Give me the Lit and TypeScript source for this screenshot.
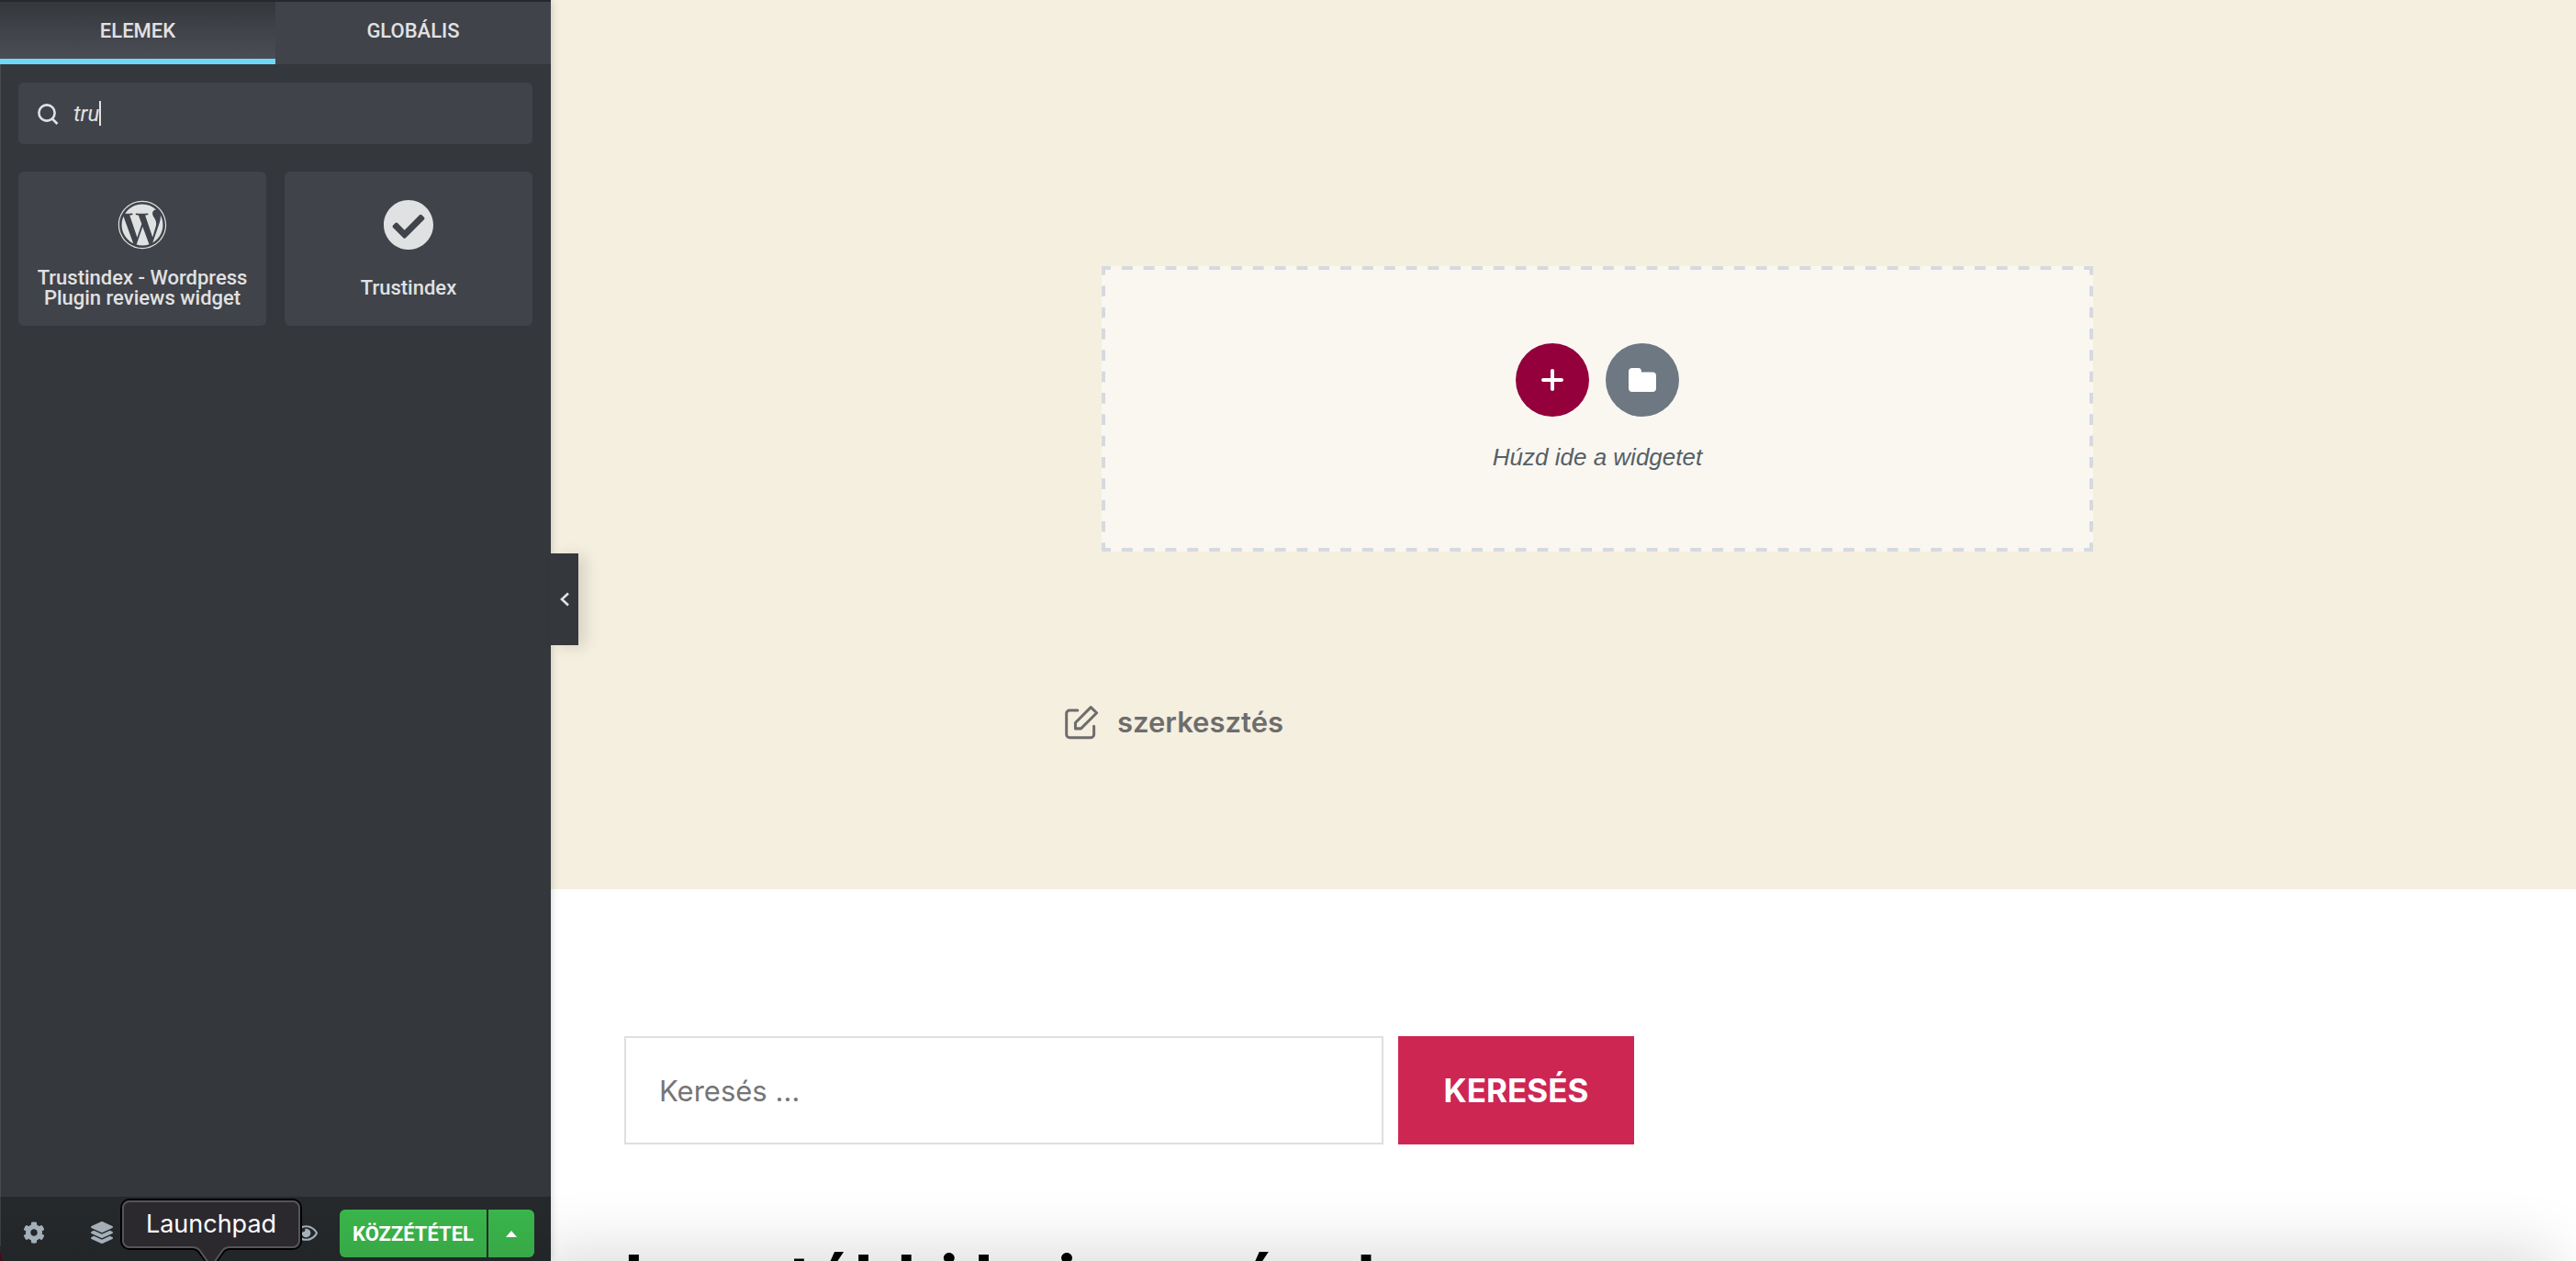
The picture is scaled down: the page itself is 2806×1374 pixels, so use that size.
import { LitElement, html, css, svg } from "lit";
import { customElement } from "lit/decorators.js";

const icon = (path: string, viewBox = "0 0 512 512") =>
  html`<svg class="icon" viewBox=${viewBox} aria-hidden="true">${svg`<path d=${path}></path>`}</svg>`;

const WORDPRESS =
  "M61.7 169.4l101.5 278C92.2 413 43.3 340.2 43.3 256c0-30.9 6.6-60.1 18.4-86.6zm337.9 75.9c0-26.3-9.4-44.5-17.5-58.7-10.8-17.5-20.9-32.4-20.9-49.9 0-19.6 14.8-37.8 35.7-37.8.9 0 1.8.1 2.8.2-37.9-34.7-88.3-55.9-143.7-55.9-74.3 0-139.7 38.1-177.8 95.9 5 .2 9.7.3 13.7.3 22.2 0 56.7-2.7 56.7-2.7 11.5-.7 12.8 16.2 1.4 17.5 0 0-11.5 1.3-24.3 2l77.5 230.4L249.8 247l-33.1-90.8c-11.5-.7-22.3-2-22.3-2-11.5-.7-10.1-18.2 1.3-17.5 0 0 35.1 2.7 56 2.7 22.2 0 56.7-2.7 56.7-2.7 11.5-.7 12.8 16.2 1.4 17.5 0 0-11.5 1.3-24.3 2l76.9 228.7 21.2-70.9c9-29.4 16-50.5 16-68.7zm-139.9 29.3l-63.8 185.5c19.1 5.6 39.2 8.7 60.1 8.7 24.8 0 48.5-4.3 70.6-12.1-.6-.9-1.1-1.9-1.5-2.9l-65.4-179.2zm183-120.7c.9 6.8 1.4 14 1.4 21.9 0 21.6-4 45.8-16.2 76.2l-65 187.9C426.2 403 468.7 334.5 468.7 256c0-37-9.4-71.8-26-102.1zM504 256c0 136.8-111.3 248-248 248C119.2 504 8 392.7 8 256 8 119.2 119.2 8 256 8c136.7 0 248 111.2 248 248zm-11.4 0c0-130.5-106.2-236.6-236.6-236.6C125.5 19.4 19.4 125.5 19.4 256S125.6 492.6 256 492.6c130.5 0 236.6-106.1 236.6-236.6z";
const CHECK =
  "M504 256c0 136.967-111.033 248-248 248S8 392.967 8 256 119.033 8 256 8s248 111.033 248 248zM227.314 387.314l184-184c6.248-6.248 6.248-16.379 0-22.627l-22.627-22.627c-6.248-6.249-16.379-6.249-22.628 0L216 308.118l-70.059-70.059c-6.248-6.248-16.379-6.248-22.628 0l-22.627 22.627c-6.248 6.248-6.248 16.379 0 22.627l104 104c6.249 6.249 16.379 6.249 22.628.001z";
const LAYERS =
  "M12.41 148.02l232.94 105.67c6.8 3.09 14.49 3.09 21.29 0l232.94-105.67c16.55-7.51 16.55-32.52 0-40.03L266.65 2.31a25.607 25.607 0 0 0-21.29 0L12.41 107.98c-16.55 7.51-16.55 32.53 0 40.04zm487.18 88.28l-58.09-26.33-161.64 73.27c-7.56 3.43-15.59 5.17-23.86 5.17s-16.29-1.74-23.86-5.17L70.51 209.97l-58.1 26.33c-16.55 7.5-16.55 32.5 0 40l232.94 105.59c6.8 3.08 14.49 3.08 21.29 0L499.59 276.3c16.55-7.5 16.55-32.5 0-40zm0 127.8l-57.87-26.23-161.86 73.37c-7.56 3.43-15.59 5.17-23.86 5.17s-16.29-1.74-23.86-5.17L70.29 337.87 12.41 364.1c-16.55 7.5-16.55 32.5 0 40l232.94 105.59c6.8 3.08 14.49 3.08 21.29 0L499.59 404.1c16.55-7.5 16.55-32.5 0-40z";
const COG =
  "M487.4 315.7l-42.6-24.6c4.3-23.2 4.3-47 0-70.2l42.6-24.6c4.9-2.8 7.1-8.6 5.5-14-11.1-35.6-30-67.8-54.7-94.6-3.8-4.1-10-5.1-14.8-2.3L380.8 110c-17.9-15.4-38.5-27.3-60.8-35.1V25.8c0-5.6-3.9-10.5-9.4-11.7-36.7-8.2-74.3-7.8-109.2 0-5.5 1.2-9.4 6.1-9.4 11.7V75c-22.2 7.9-42.8 19.8-60.8 35.1L88.7 85.5c-4.9-2.8-11-1.9-14.8 2.3-24.7 26.7-43.6 58.9-54.7 94.6-1.7 5.4.6 11.2 5.5 14L67.3 221c-4.3 23.2-4.3 47 0 70.2l-42.6 24.6c-4.9 2.8-7.1 8.6-5.5 14 11.1 35.6 30 67.8 54.7 94.6 3.8 4.1 10 5.1 14.8 2.3l42.6-24.6c17.9 15.4 38.5 27.3 60.8 35.1v49.2c0 5.6 3.9 10.5 9.4 11.7 36.7 8.2 74.3 7.8 109.2 0 5.5-1.2 9.4-6.1 9.4-11.7v-49.2c22.2-7.9 42.8-19.8 60.8-35.1l42.6 24.6c4.9 2.8 11 1.9 14.8-2.3 24.7-26.7 43.6-58.9 54.7-94.6 1.5-5.5-.7-11.3-5.6-14.1zM256 336c-44.1 0-80-35.9-80-80s35.9-80 80-80 80 35.9 80 80-35.9 80-80 80z";
const EYE =
  "M288 144a110.94 110.94 0 0 0-31.24 5 55.4 55.4 0 0 1 7.24 27 56 56 0 0 1-56 56 55.4 55.4 0 0 1-27-7.24A111.71 111.71 0 1 0 288 144zm284.52 97.4C518.29 135.59 410.93 64 288 64S57.68 135.64 3.48 241.41a32.35 32.35 0 0 0 0 29.19C57.71 376.41 165.07 448 288 448s230.32-71.64 284.52-177.41a32.35 32.35 0 0 0 0-29.19zM288 400c-98.65 0-189.09-55-237.93-144C98.91 167 189.34 112 288 112s189.09 55 237.93 144C477.1 345 386.66 400 288 400z";

const base = css`
  * { box-sizing: border-box; }
  button, input { font: inherit; color: inherit; margin: 0; border: 0; padding: 0; background: none; border-radius: 0; outline: none; }
  button { cursor: pointer; display: flex; align-items: center; justify-content: center; }
  svg { display: block; fill: currentColor; }
`;

@customElement("editor-panel")
class EditorPanel extends LitElement {
  static styles = [
    base,
    css`
      :host { display: flex; flex-direction: column; position: relative; z-index: 2; background: #34383c; color: #e0e1e3; font-family: Roboto, sans-serif; font-size: 22px; box-shadow: 0 0 10px rgba(0, 0, 0, 0.2); border-bottom-left-radius: 6px 16px; }
      :host::after { content: ""; position: absolute; left: 0; top: 70px; bottom: 16px; width: 1px; background: rgba(255, 255, 255, 0.1); }
      .tabs { display: grid; grid-template-columns: 1fr 1fr; border-top: 2px solid #26292c; height: 70px; }
      .tab { background: #404349; font-weight: 500; padding-bottom: 6px; text-transform: uppercase; }
      .tab.active { background: linear-gradient(#34383c, #4b4d56); border-bottom: 6px solid #71d7f7; padding: 0; }
      .search { display: flex; align-items: center; margin: 20px 20px 0; height: 67px; padding: 0 20px; background: #404349; border-radius: 6px; }
      .search svg { width: 24px; height: 28px; flex: none; margin-right: 16px; }
      .search input { font-style: italic; font-size: 24px; height: 40px; flex: none; field-sizing: content; caret-color: transparent; }
      .caret { width: 2px; height: 27px; background: #e0e1e3; }
      .cards { display: grid; grid-template-columns: 1fr 1fr; gap: 20px; padding: 30px 20px 0; flex: 1; align-content: start; }
      .card { min-height: 168px; border-radius: 6px; background: #404349; flex-direction: column; justify-content: flex-start; font-weight: 500; line-height: 22px; padding: 31px 10px 0; gap: 20px; }
      .card .icon { width: 54px; height: 54px; }
      .card .name { min-height: 44px; display: flex; align-items: center; text-align: center; }
      .footer { display: flex; height: 70px; background: linear-gradient(#26292c, #232629); padding: 10px 18px 0 0; border-bottom-left-radius: 6px 16px; }
      .tools { display: grid; grid-template-columns: repeat(5, 1fr); flex: 1; color: #a4afb7; padding-bottom: 2px; }
      .tools .icon { width: 24px; height: 24px; }
      .tools .eye { grid-column: 5; }
      .tools .eye .icon { width: 25px; height: 17px; }
      .publish { display: flex; gap: 2px; align-items: flex-start; padding-top: 4px; color: #fff; font-weight: 700; }
      .publish button { height: 52px; background: linear-gradient(#39b54a, #38a847); }
      .main { width: 160px; border-radius: 6px 0 0 6px; text-transform: uppercase; }
      .more { width: 50px; border-radius: 0 6px 6px 0; }
      .handle { position: absolute; left: 100%; top: 603px; width: 30px; height: 100px; background: #34383c; box-shadow: 8px 2px 16px rgba(0, 0, 0, 0.12); }
      .handle svg { width: 12px; height: 16px; }
      .tip { position: absolute; z-index: 1; left: 131px; bottom: 0; width: 198px; height: 68px; padding-top: 10px; text-align: center; font: 27px/36px Inter, sans-serif; color: #fff; }
      .tip svg { position: absolute; inset: 0; z-index: -1; width: 198px; height: 68px; }
    `,
  ];

  render() {
    return html`
      <div class="tabs">
        <button class="tab active">Elemek</button>
        <button class="tab">Globális</button>
      </div>
      <label class="search">
        <svg viewBox="0 0 24 28" aria-hidden="true"><g fill="none" stroke="currentColor" stroke-width="2.6"><circle cx="11" cy="13" r="8.6"></circle><path d="M17 19.500l5.500 5.500"></path></g></svg>
        <input type="text" value="tru" aria-label="Keresés" />
        <span class="caret"></span>
      </label>
      <div class="cards">
        <button class="card">${icon(WORDPRESS)}<span class="name">Trustindex - Wordpress Plugin reviews widget</span></button>
        <button class="card">${icon(CHECK, "8 8 496 496")}<span class="name">Trustindex</span></button>
      </div>
      <div class="footer">
        <div class="tools">
          <button>${icon(COG)}</button>
          <button>${icon(LAYERS)}</button>
          <button class="eye">${icon(EYE, "0 64 576 384")}</button>
        </div>
        <div class="publish">
          <button class="main">Közzététel</button>
          <button class="more"><svg width="12" height="7" viewBox="0 0 12 7" aria-hidden="true"><path d="M6 0l6 7H0z"></path></svg></button>
        </div>
      </div>
      <button class="handle"><svg viewBox="0 0 12 16" aria-hidden="true"><path d="M10 1.500L3 8l7 6.500" fill="none" stroke="#e0e1e3" stroke-width="2.600"></path></svg></button>
      <div class="tip" role="tooltip">
        <svg viewBox="0 0 198 68" aria-hidden="true">
          <path d="M10 1H188a9 9 0 0 1 9 9V46a9 9 0 0 1-9 9H119Q115 55 112 59L104 70H94L86 59Q83 55 79 55H10a9 9 0 0 1-9-9V10a9 9 0 0 1 9-9z" fill="#2b292e" stroke="#000" stroke-width="2"></path>
          <path d="M10 3H188a7 7 0 0 1 7 7V46a7 7 0 0 1-7 7H119Q114 53 111 57L102 70H96L87 57Q84 53 79 53H10a7 7 0 0 1-7-7V10a7 7 0 0 1 7-7z" fill="none" stroke="#555457" stroke-width="2"></path>
        </svg>
        Launchpad
      </div>
    `;
  }
}

@customElement("page-preview")
class PagePreview extends LitElement {
  static styles = [
    base,
    css`
      :host { display: flex; flex-direction: column; position: relative; overflow: hidden; background: #fff; font-family: Inter, sans-serif; }
      .content { background: #f5efe0; padding: 290px 0 161px 74px; display: flex; flex-direction: column; align-items: center; }
      .drop { position: relative; width: 100%; max-width: 1080px; background: rgba(255, 255, 255, 0.5); display: flex; flex-direction: column; align-items: center; padding: 84px 0 87px; }
      .dashes { position: absolute; inset: 0; width: 100%; height: 100%; overflow: hidden; stroke: #d5dadf; stroke-width: 8px; stroke-dasharray: 12 12; stroke-dashoffset: 2; }
      .actions { display: flex; gap: 18px; color: #fff; }
      .round { width: 80px; height: 80px; border-radius: 50%; background: #93003c; }
      .round.grey { background: #6d7882; }
      .hint { margin-top: 28px; font: italic 26px/32px "Liberation Sans", sans-serif; color: #556068; }
      .meta { width: 100%; max-width: 1160px; margin-top: 165px; display: flex; }
      .edit { display: flex; align-items: center; gap: 18px; color: #6d6d6d; font-weight: 600; font-size: 31px; line-height: 42px; text-decoration: none; }
      .edit svg { width: 39px; height: 39px; }
      .widgets { padding: 160px 80px 0; }
      .form { display: flex; gap: 16px; max-width: 1100px; height: 118px; }
      .field { flex: 1; border: 2px solid #dedfdf; padding: 0 36px; font-size: 31px; }
      .field::placeholder { color: #757575; opacity: 1; }
      .submit { width: 257px; background: #cd2653; color: #fff; font-weight: 700; font-size: 35px; text-transform: uppercase; }
      h2 { margin: 101px 0 0; font-size: 74px; line-height: 92px; font-weight: 700; color: #000; white-space: nowrap; }
      .shade { position: absolute; left: 0; right: 40px; top: 100%; height: 60px; box-shadow: 0 0 64px 16px rgba(0, 0, 0, 0.13); }
    `,
  ];

  render() {
    return html`
      <section class="content">
        <div class="drop">
          <svg class="dashes" aria-hidden="true">
            <line x1="0" y1="0" x2="100%" y2="0" pathLength="1088"></line>
            <line x1="0" y1="100%" x2="100%" y2="100%" pathLength="1088"></line>
            <line x1="0" y1="0" x2="0" y2="100%" pathLength="320"></line>
            <line x1="100%" y1="0" x2="100%" y2="100%" pathLength="320"></line>
          </svg>
          <div class="actions">
            <button class="round"><svg width="24" height="24" viewBox="0 0 24 24" aria-hidden="true"><path d="M12 2v20M2 12h20" stroke="#fff" stroke-width="4" stroke-linecap="round"></path></svg></button>
            <button class="round grey"><svg width="30" height="26" viewBox="0 0 30 26" aria-hidden="true"><path d="M4 0h7q3 0 3 4.500h12q4 0 4 4V22q0 4-4 4H4q-4 0-4-4V4q0-4 4-4z"></path></svg></button>
          </div>
          <div class="hint">Húzd ide a widgetet</div>
        </div>
        <div class="meta">
          <a class="edit" href="#"><svg viewBox="90 78 116 116" aria-hidden="true"><g fill="none" stroke="currentColor" stroke-width="9" stroke-linecap="round" stroke-linejoin="round"><path d="M131 96H105a10 10 0 0 0-10 10v68a10 10 0 0 0 10 10h69a10 10 0 0 0 10-10v-27"></path><path d="M174 86l19 18-51 51h-18v-19z"></path></g></svg><span>szerkesztés</span></a>
        </div>
      </section>
      <section class="widgets">
        <form class="form" @submit=${(e: Event) => e.preventDefault()}>
          <input class="field" type="search" placeholder="Keresés …" aria-label="Keresés" />
          <button class="submit">Keresés</button>
        </form>
        <h2>Legutóbbi bejegyzések</h2>
      </section>
      <div class="shade"></div>
    `;
  }
}

@customElement("app-root")
class AppRoot extends LitElement {
  static styles = css`
    :host { display: grid; grid-template-columns: 600px minmax(0, 1fr); grid-template-rows: minmax(0, 1fr); height: 100vh; overflow: hidden; background: #4a0d18; }
  `;
  render() {
    return html`<editor-panel></editor-panel><page-preview></page-preview>`;
  }
}
